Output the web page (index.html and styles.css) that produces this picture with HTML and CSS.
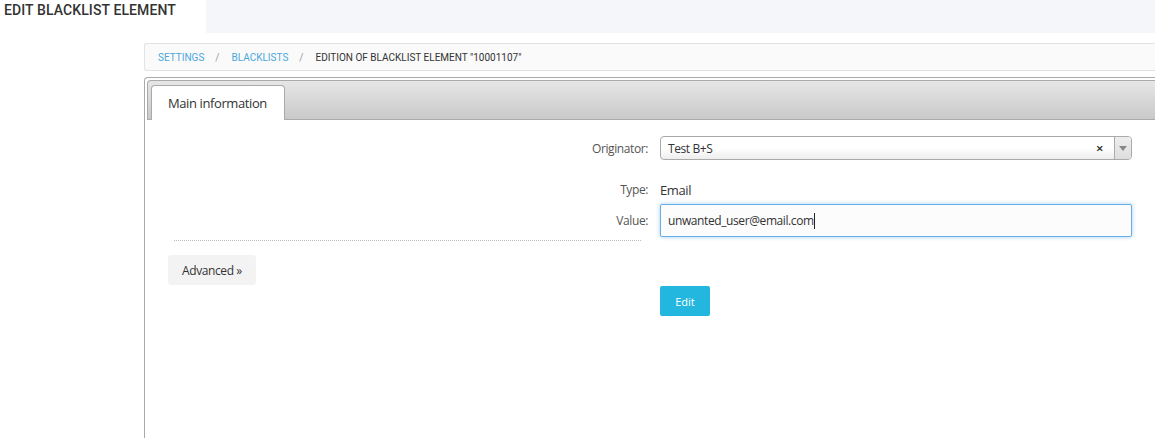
FILE: index.html
```html
<!DOCTYPE html>
<html>
<head>
<meta charset="utf-8">
<link rel="stylesheet" href="styles.css">
</head>
<body>
<div class="top">
  <h1 class="title">EDIT BLACKLIST ELEMENT</h1>
  <div class="band"></div>
</div>
<div class="content">
  <div class="crumbs">
    <a class="crumb-link">SETTINGS</a><span class="sep">/</span>
    <a class="crumb-link">BLACKLISTS</a><span class="sep">/</span>
    <span class="crumb-current">EDITION OF BLACKLIST ELEMENT "10001107"</span>
  </div>
  <div class="panel">
    <div class="tabbar">
      <div class="tab">Main information</div>
    </div>
    <div class="form">
      <div class="row row-select">
        <label class="label">Originator:</label>
        <div class="select">
          <span class="select-text">Test B+S</span>
          <span class="select-clear">×</span>
          <span class="select-arrow"><svg width="8" height="5" viewBox="0 0 8 5"><path d="M0 0h8L4 5z" fill="#888"/></svg></span>
        </div>
      </div>
      <div class="row row-type">
        <label class="label">Type:</label>
        <div class="static">Email</div>
      </div>
      <div class="row row-value">
        <label class="label">Value:</label>
        <div class="input">unwanted_user@email.com<span class="caret"></span></div>
      </div>
    </div>
    <div class="divider"></div>
    <button class="btn-advanced">Advanced »</button>
    <div class="actions">
      <button class="btn-edit">Edit</button>
    </div>
  </div>
</div>
</body>
</html>
```
FILE: styles.css
```css
html, body { margin: 0; padding: 0; background: #fff; }
body { font-family: "Open Sans", "Noto Sans", sans-serif; color: #333; height: 438px; overflow: hidden; }

.top { display: flex; height: 34px; }
.title {
  margin: 0; width: 206px; padding: 2px 0 0 4px; box-sizing: border-box;
  font-family: Roboto, "Liberation Sans", sans-serif; font-weight: 500; font-size: 14px;
  color: #333; line-height: 16px; letter-spacing: 0.1px;
}
.band { flex: 1; background: #f5f6fa; height: 33px; }

.content { margin-left: 144px; padding-top: 9px; }
.crumbs {
  height: 26px; border: 1px solid #e3e3e3; border-right: none; border-radius: 3px 0 0 3px;
  background: #fafafa; display: flex; align-items: center; padding-left: 13px;
  font-family: Roboto, "Liberation Sans", sans-serif; font-size: 10px;
}
.crumb-link { color: #4aa7dc; }
.sep { color: #999; margin: 0 12px 0 11px; font-size: 10px; }
.crumb-current { color: #333; }

.panel {
  margin-top: 6px; border-left: 1px solid #aaa; border-top: 1px solid #aaa;
  border-top-left-radius: 4px; height: 370px; padding: 2px 0 0 2px; box-sizing: border-box;
  letter-spacing: -0.4px;
}
.tabbar {
  height: 40px; box-sizing: border-box; border: 1px solid #aaa; border-right: none;
  border-top-left-radius: 4px;
  background: linear-gradient(#e6e6e6, #c9c9c9);
  display: flex; align-items: flex-end; padding-left: 3px;
}
.tab {
  height: 35px; box-sizing: border-box; margin-bottom: -1px;
  background: #fff; border: 1px solid #aaa; border-bottom: none; border-radius: 4px 4px 0 0;
  padding: 0 17px 0 16px; white-space: nowrap;
  font-size: 13px; line-height: 35px; color: #333;
}

.form { margin-left: -2px; padding-top: 16px; display: flex; flex-direction: column; }
.row { display: grid; grid-template-columns: 503px 472px; column-gap: 12px; align-items: center; }
.label { text-align: right; font-size: 12px; color: #555; }
.row-select { height: 24px; }
.row-type { height: 29px; margin-top: 15px; }
.row-value { height: 33px; margin-top: 0; }

.select {
  height: 24px; box-sizing: border-box; border: 1px solid #aaa; border-radius: 4px;
  background: linear-gradient(#fff 50%, #eee); display: flex; align-items: center;
  font-size: 12px; color: #333;
}
.select-text { flex: 1; padding-left: 7px; }
.select-clear { font-size: 13px; color: #222; font-weight: 600; width: 12px; margin-right: 6px; }
.select-arrow {
  width: 16px; height: 100%; border-left: 1px solid #aaa; display: flex; align-items: center;
  justify-content: center; background: linear-gradient(#eee, #ddd); border-radius: 0 3px 3px 0;
}
.static { font-size: 13px; color: #333; }
.input {
  height: 33px; box-sizing: border-box; border: 1px solid #66afe9; border-radius: 2px;
  box-shadow: 0 0 4px rgba(102, 175, 233, 0.6); background: #fcfcfc;
  padding-left: 7px; font-size: 12px; line-height: 31px; color: #333; display: flex; align-items: center;
}
.caret { display: inline-block; width: 1px; height: 16px; background: #222; }

.divider { margin: 3px 0 0 27px; width: 467px; border-top: 1px dotted #bbb; }
.btn-advanced {
  display: block; margin: 14px 0 0 21px; width: 88px; height: 30px;
  background: #f3f3f3; border: none; border-radius: 3px; letter-spacing: -0.4px;
  font-family: "Open Sans", "Noto Sans", sans-serif; font-size: 12px; color: #333; padding: 0;
}
.actions { padding-left: 513px; margin-top: 1px; }
.btn-edit {
  width: 50px; height: 30px; background: #23b7e0; color: #fff; border: none; border-radius: 2px;
  font-family: "Open Sans", "Noto Sans", sans-serif; font-size: 11px; padding: 0;
}
```
